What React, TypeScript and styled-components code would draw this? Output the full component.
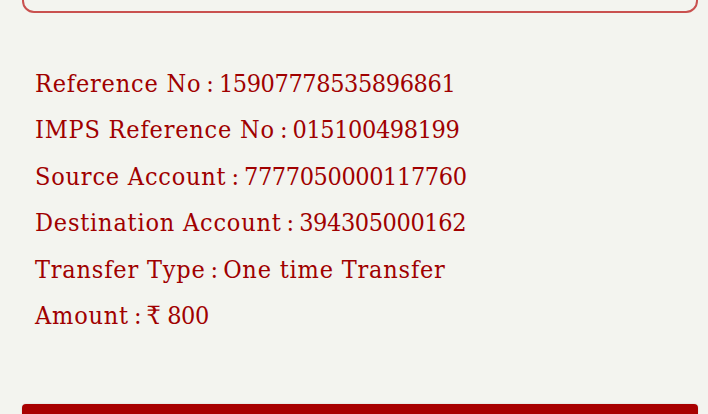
import React from 'react';
import styled, { createGlobalStyle } from 'styled-components';

const GlobalStyle = createGlobalStyle`
  html, body {
    margin: 0;
    padding: 0;
    background: #f3f4ef;
  }
  body {
    width: 708px;
    height: 414px;
    overflow: hidden;
  }
`;

const Page = styled.div`
  width: 708px;
  height: 414px;
  box-sizing: border-box;
  padding: 0 10px 0 22px;
  display: flex;
  flex-direction: column;
  overflow: hidden;
`;

const TopCard = styled.div`
  flex: none;
  height: 40px;
  margin-top: -27px;
  box-sizing: border-box;
  border: 2px solid #c9514f;
  border-radius: 12px;
  background: #f3f4ef;
`;

const Details = styled.div`
  flex: 1;
  display: flex;
  flex-direction: column;
  padding: 48px 0 0 13px;
`;

const Line = styled.div`
  font-family: "DejaVu Serif Condensed", "DejaVu Serif", serif;
  font-size: 25px;
  line-height: 46.4px;
  color: #a00000;
  white-space: nowrap;
`;

const Label = styled.span`
  letter-spacing: 0.8px;
  margin-right: 5px;
`;

const Value = styled.span<{ $numeric?: boolean }>`
  margin-left: 5px;
  letter-spacing: ${(p) => (p.$numeric ? '-0.4px' : '0.8px')};
`;

const ActionBar = styled.div`
  flex: none;
  height: 10px;
  background: #a80000;
  border-radius: 4px 4px 0 0;
  box-shadow: 0 0 2px rgba(0, 0, 0, 0.15);
`;

const rows = [
  { label: 'Reference No', value: '15907778535896861', numeric: true },
  { label: 'IMPS Reference No', value: '015100498199', numeric: true },
  { label: 'Source Account', value: '7777050000117760', numeric: true },
  { label: 'Destination Account', value: '394305000162', numeric: true },
  { label: 'Transfer Type', value: 'One time Transfer', numeric: false },
  { label: 'Amount', value: '₹ 800', numeric: true },
];

export default function App() {
  return (
    <>
      <GlobalStyle />
      <Page>
        <TopCard />
        <Details>
          {rows.map((r) => (
            <Line key={r.label}>
              <Label>{r.label}</Label>:<Value $numeric={r.numeric}>{r.value}</Value>
            </Line>
          ))}
        </Details>
        <ActionBar />
      </Page>
    </>
  );
}
